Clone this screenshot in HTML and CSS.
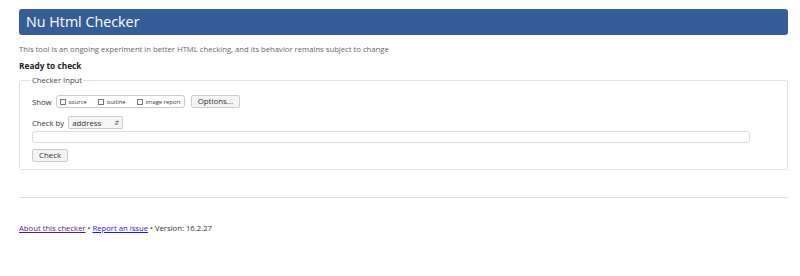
FILE: index.html
```html
<!DOCTYPE html>
<html lang="en">
<head>
    <meta charset="UTF-8">
    <title>Nu Html Checker</title>
    <link rel="stylesheet" href="styles.css">
</head>
<body>
    <h1><span>Nu Html Checker</span></h1>
    <p class="tagline">This tool is an ongoing experiment in better HTML checking, and its behavior remains subject to change</p>
    <h2>Ready to check</h2>

    <form>
        <fieldset>
            <legend>Checker Input</legend>
            <div class="row">
                <span class="label">Show</span>
                <span class="show-group">
                    <label><input type="checkbox"> source</label>
                    <label><input type="checkbox"> outline</label>
                    <label><input type="checkbox"> image report</label>
                </span>
                <button type="button" class="btn">Options...</button>
            </div>
            <div class="row">
                <span class="label">Check by</span>
                <span class="select">address <span class="arrows">&#8693;</span></span>
            </div>
            <div class="url"><input type="text"></div>
            <div class="row last">
                <button type="submit" class="btn">Check</button>
            </div>
        </fieldset>
    </form>

    <hr>

    <p class="footer"><a href="#" class="visited">About this checker</a> &bull; <a href="#">Report an issue</a> &bull; Version: 16.2.27</p>
</body>
</html>
```

FILE: styles.css
```css
body {
    font-family: "Open Sans", "DejaVu Sans", sans-serif;
    margin: 9px 12px 0 19px;
    background: white;
    color: #222;
}
h1 {
    background-color: #365d95;
    color: white;
    font-size: 14.3px;
    font-weight: normal;
    margin: 0;
    height: 26px;
    line-height: 26px;
    padding: 0 7px;
    border-radius: 3px;
}
.tagline {
    font-size: 7.7px;
    color: #666;
    margin: 9px 0 0;
}
h2 {
    font-size: 8.3px;
    font-weight: bold;
    margin: 6px 0 0;
    color: #222;
}
fieldset {
    border: 1px solid #e3e3e3;
    border-radius: 2px;
    margin: 4px 0 0;
    padding: 10px 12px 7px;
}
legend {
    font-size: 7.7px;
    color: #444;
    padding: 0 1px;
    margin-left: -1px;
}
.row {
    display: flex;
    align-items: center;
    gap: 4px;
    font-size: 7.7px;
    color: #333;
    margin-bottom: 8px;
}
.row.last {
    margin-bottom: 0;
}
.show-group {
    display: inline-flex;
    align-items: center;
    gap: 11px;
    border: 1px solid #ccc;
    border-radius: 3px;
    height: 11px;
    padding: 0 3px;
    font-size: 5.8px;
}
.show-group label {
    display: inline-flex;
    align-items: center;
    gap: 3px;
}
.show-group input {
    width: 6px;
    height: 6px;
    margin: 0;
    appearance: none;
    border: 1px solid #777;
    background: white;
}
.btn {
    font-family: inherit;
    font-size: 7.9px;
    color: #333;
    background: #f4f4f4;
    border: 1px solid #ccc;
    border-radius: 2px;
    height: 13px;
    padding: 0 6px;
    margin-left: 2px;
    line-height: 11px;
}
.row .btn[type=submit] {
    margin-left: 0;
}
.select {
    display: inline-flex;
    justify-content: space-between;
    align-items: center;
    width: 47px;
    height: 11px;
    padding: 0 3px;
    border: 1px solid #ccc;
    border-radius: 2px;
    background: #f6f6f6;
    font-size: 7.9px;
    color: #333;
}
.arrows {
    font-size: 6px;
    color: #555;
}
.url {
    margin: -6px 25px 6px 0;
}
.url input {
    box-sizing: border-box;
    width: 100%;
    height: 12px;
    border: 1px solid #ddd;
    border-radius: 3px;
    display: block;
}
hr {
    border: none;
    border-top: 1px solid #ddd;
    margin: 27px 0 0;
}
.footer {
    font-size: 7.7px;
    color: #333;
    margin: 25px 0 0;
}
.footer a {
    color: #1a1aee;
}
.footer a.visited {
    color: #551a8b;
}
```
